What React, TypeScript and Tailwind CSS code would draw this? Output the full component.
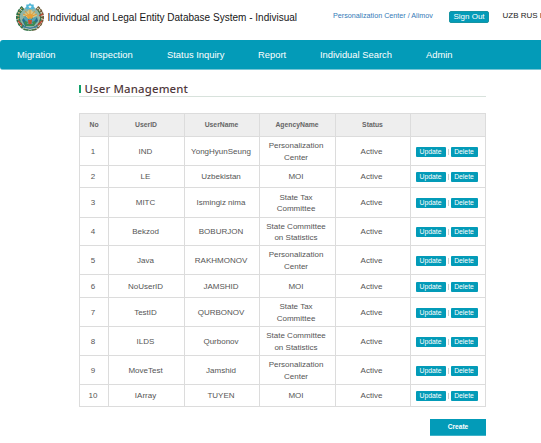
import React from "react";

const nav = [
  { label: "Migration", width: "w-[73px]" },
  { label: "Inspection", width: "w-[77px]" },
  { label: "Status Inquiry", width: "w-[91px]" },
  { label: "Report", width: "w-[62px]" },
  { label: "Individual Search", width: "w-[106px]" },
  { label: "Admin", width: "w-[60px]" },
];

const users = [
  { id: "IND", name: "YongHyunSeung", agency: ["Personalization", "Center"], height: "h-[29px]" },
  { id: "LE", name: "Uzbekistan", agency: ["MOI"], height: "h-[22px]" },
  { id: "MITC", name: "Ismingiz nima", agency: ["State Tax", "Committee"], height: "h-[30px]" },
  { id: "Bekzod", name: "BOBURJON", agency: ["State Committee", "on Statistics"], height: "h-[28px]" },
  { id: "Java", name: "RAKHMONOV", agency: ["Personalization", "Center"], height: "h-[29px]" },
  { id: "NoUserID", name: "JAMSHID", agency: ["MOI"], height: "h-[23px]" },
  { id: "TestID", name: "QURBONOV", agency: ["State Tax", "Committee"], height: "h-[29px]" },
  { id: "ILDS", name: "Qurbonov", agency: ["State Committee", "on Statistics"], height: "h-[29px]" },
  { id: "MoveTest", name: "Jamshid", agency: ["Personalization", "Center"], height: "h-[29px]" },
  { id: "IArray", name: "TUYEN", agency: ["MOI"], height: "h-[22px]" },
];

const columns = "grid grid-cols-[29px_76px_75px_76px_75px_75px]";
const cell = "flex items-center justify-center border-r border-b border-[#dcdcdc] pt-px text-center";

function Emblem() {
  return (
    <svg viewBox="0 0 28 28" className="h-7 w-7 shrink-0">
      <circle cx="14" cy="15" r="11" fill="#8fb5a8" />
      <path d="M7 12 L14 6 L21 12 L21 18 H7Z" fill="#d9c583" />
      <path d="M9 8l5 6M19 8l-5 6M7 11l7 3M21 11l-7 3M14 6v8" stroke="#d99a3c" strokeWidth="1" />
      <path d="M6 17 9 13l3 3 3-3 3 3 3-2 1 4-5 5H9Z" fill="#23718c" />
      <path d="M8 19q6-4 12 0l-2 4h-8Z" fill="#3f8a52" />
      <circle cx="14" cy="13.5" r="2.8" fill="#e9a136" />
      <path d="M7 13q4 1 6 4l1-3 1 3q2-3 6-4-1 5-5 6l1 2h-6l1-2q-4-1-5-6Z" fill="#58a3b3" />
      <path d="M12 17h4l-.5 4h-3Z" fill="#c4542f" />
      <path d="M7 4.5Q-.5 11 3 19q2 5.5 9 7.5" fill="none" stroke="#2b7048" strokeWidth="3.8" strokeDasharray="2.8 .6" />
      <path d="M21 4.5q7.5 6.5 4 14.5-2 5.5-9 7.5" fill="none" stroke="#6c5a35" strokeWidth="3.8" strokeDasharray="2.8 .6" />
      <path d="M6 5Q0 12 3.5 20q2 4 7 6" fill="none" stroke="#d89a49" strokeWidth="1.3" strokeDasharray="1.2 1.5" />
      <path d="M21.5 5q6.5 7 3 15-2 4-7 6" fill="none" stroke="#e4d9bb" strokeWidth="1.5" strokeDasharray="1.3 1.5" />
      <path d="M22 7q5 6 1.5 13" fill="none" stroke="#39764a" strokeWidth="1.1" />
      <path d="M2 18l4 4M22 22l4-4M23 13l4-2" stroke="#c74636" strokeWidth="1.3" />
      <path d="M6 22q8 5 16 0l-1 3q-7 4-14 0Z" fill="#397fa2" />
      <path d="M7 25q7 3 14 0" fill="none" stroke="#e0d8bd" strokeWidth=".9" />
      <path d="M8 26q6 3 12 0" fill="none" stroke="#3e7647" strokeWidth="1" />
      <path d="m14 0 1.5 1.5h2.2v2.2L19 5l-2 1.3H11L9 5l1.3-1.3V1.5h2.2Z" fill="#50b6d7" />
      <path d="m14 1.7.5 1.3h1.4l-1 1 .4 1.4-1.3-.8-1.3.8.4-1.4-1-1h1.4Z" fill="#f1f6ed" />
    </svg>
  );
}

function Action({ label, width }: { label: string; width: string }) {
  return (
    <button className={`${width} flex h-[10px] items-center justify-center rounded-[1px] bg-[#039bb8] pt-px text-[6.8px] leading-none text-white`}>
      {label}
    </button>
  );
}

export default function App() {
  return (
    <div className="flex h-[443px] w-[541px] flex-col overflow-hidden bg-white font-['Liberation_Sans',Arial,sans-serif] text-[#555]">
      <header className="flex h-10 shrink-0 whitespace-nowrap pl-[15.5px] pt-[3px]">
        <Emblem />
        <h1 className="ml-[4px] w-[285.5px] shrink-0 pt-2 text-[10px] leading-[14px] tracking-[0.01px] text-[#161616]">
          Individual and Legal Entity Database System - Indivisual
        </h1>
        <span className="w-[116px] shrink-0 pt-[7px] text-[7.2px] leading-[12px] text-[#337ab7]">
          Personalization Center / Alimov
        </span>
        <button className="mt-2 flex h-[12px] w-10 shrink-0 items-center justify-center rounded-[2px] border border-[#1694a2] bg-[#039bb8] text-[8px] leading-none text-white">
          Sign Out
        </button>
        <span className="ml-[13.5px] pt-[7px] text-[8px] leading-[12px] text-[#222]">UZB RUS I</span>
      </header>
      <nav className="flex h-[30px] shrink-0 items-center rounded-l-[3px] border-b border-[#78c6d5] bg-[#039bb8] pl-[17px] pt-px text-[9.4px] text-white">
        {nav.map((item) => (
          <a key={item.label} className={`${item.width} shrink-0 whitespace-nowrap`}>
            {item.label}
          </a>
        ))}
      </nav>
      <main className="ml-[79px] w-[407px]">
        <div className="flex h-[27px] items-end border-b border-[#d8e2dc] pb-[3px]">
          <span className="mb-0 h-2 w-[2px] bg-[#12a16b]" />
          <h2 className="mb-[-1px] ml-[3.5px] whitespace-nowrap font-['Noto_Sans'] text-[11.4px] font-medium leading-[11px] tracking-[0.15px] text-[#50393b]">
            User Management
          </h2>
        </div>
        <section className="mt-4 w-[407px] border-l border-t border-[#dcdcdc] text-[8px]">
          <div className={`${columns} h-[23px] bg-[#eee] text-[6.8px] font-bold text-[#666]`}>
            {["No", "UserID", "UserName", "AgencyName", "Status", ""].map((label) => (
              <div key={label} className={`${cell} ${label === "No" ? "" : "pr-px"}`}>{label}</div>
            ))}
          </div>
          {users.map((user, index) => (
            <div key={user.id} className={`${columns} ${user.height}`}>
              <div className={`${cell} pr-[2px]`}>{index + 1}</div>
              <div className={`${cell} pr-[2px]`}>{user.id}</div>
              <div className={`${cell} pr-[2px]`}>{user.name}</div>
              <div className={`${cell} flex-col pr-[3px] leading-[11.5px]`}>
                {user.agency.map((line) => (
                  <span key={line} className="whitespace-nowrap">{line}</span>
                ))}
              </div>
              <div className={`${cell} pr-[3px]`}>Active</div>
              <div className={`${cell} gap-[2px] pr-[3px]`}>
                <Action label="Update" width="w-[30px]" />
                <span className="h-[6px] w-px bg-[#ccc]" />
                <Action label="Delete" width="w-[27px]" />
              </div>
            </div>
          ))}
        </section>
        <button className="ml-auto mt-3 flex h-[17px] w-14 items-center justify-center border-b border-[#40b3c9] bg-[#039bb8] text-[6.6px] font-bold text-white">
          Create
        </button>
      </main>
    </div>
  );
}
